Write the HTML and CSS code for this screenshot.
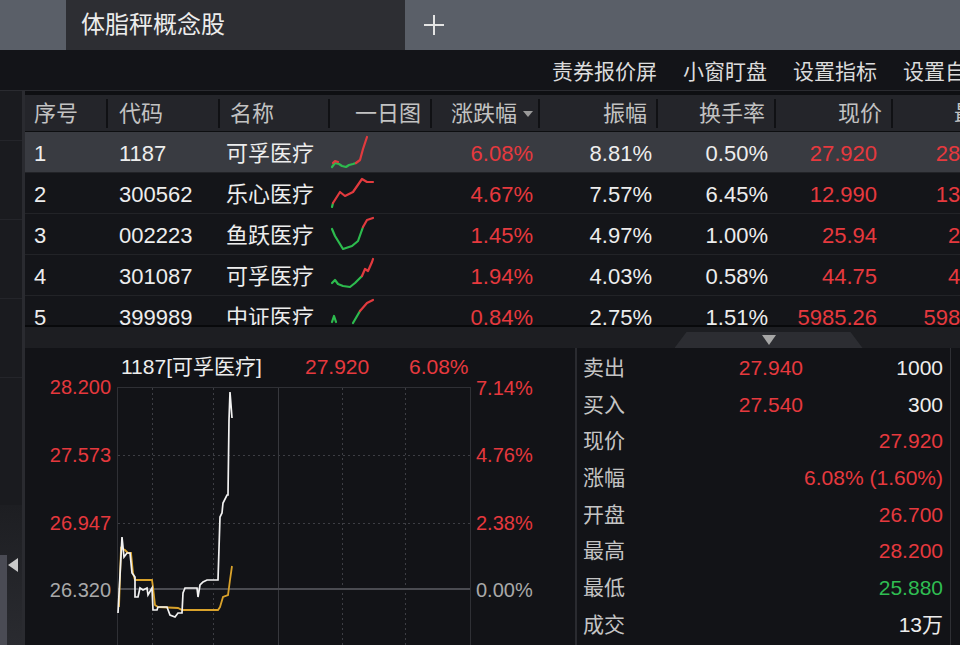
FILE: index.html
```html
<!DOCTYPE html>
<html lang="zh-CN">
<head>
    <meta charset="UTF-8">
    <title>体脂秤概念股</title>
    <link rel="stylesheet" href="styles.css">
</head>
<body>
    <div class="tabbar">
        <div class="tab-gap"></div>
        <div class="tab">体脂秤概念股</div>
        <div class="tab-add">
            <svg width="22" height="22" viewBox="0 0 22 22"><path d="M11 1v20M1 11h20" stroke="#e4e4e4" stroke-width="2"/></svg>
        </div>
    </div>
    <div class="toolbar">
        <span>责券报价屏</span><span>小窗盯盘</span><span>设置指标</span><span>设置自选</span>
    </div>

    <div class="main">
        <div class="sidebar">
            <div class="side-top"><i></i><i></i><i></i><i></i></div>
            <div class="side-grip">
                <div class="grip-edge"></div>
                <div class="grip-arrow">
                    <svg width="10" height="14" viewBox="0 0 10 14"><path d="M10 0v14L0 7z" fill="#c9c9c9"/></svg>
                </div>
            </div>
        </div>

        <div class="content">
            <div class="quote-table">
                <div class="row head">
                    <div>序号</div><div>代码</div><div>名称</div><div>一日图</div>
                    <div>涨跌幅 <svg class="sort" width="10" height="6" viewBox="0 0 10 6"><path d="M0 0h10L5 6z" fill="#9a9a9a"/></svg></div>
                    <div>振幅</div><div>换手率</div><div>现价</div><div>最高</div>
                </div>
                <div class="row active">
                    <div>1</div><div>1187</div><div>可孚医疗</div>
                    <div><svg class="spark" viewBox="0 0 46 40"><polyline class="g" points="2,35 5,31 9,32 12,34 16,35 19,33 23,32 26,31"/><polyline class="r" points="3,31 5,29 8,30"/><polyline class="r" points="26,31 30,28 33,17 37,5"/></svg></div>
                    <div class="up">6.08%</div><div>8.81%</div><div>0.50%</div><div class="up">27.920</div><div class="up">28.200</div>
                </div>
                <div class="row">
                    <div>2</div><div>300562</div><div>乐心医疗</div>
                    <div><svg class="spark" viewBox="0 0 46 40"><polyline class="g" points="2,34 3,30"/><polyline class="r" points="3,30 10,19 15,23 23,19 32,6 37,9 43,9"/></svg></div>
                    <div class="up">4.67%</div><div>7.57%</div><div>6.45%</div><div class="up">12.990</div><div class="up">13.190</div>
                </div>
                <div class="row">
                    <div>3</div><div>002223</div><div>鱼跃医疗</div>
                    <div><svg class="spark" viewBox="0 0 46 40"><polyline class="g" points="2,15 5,22 13,35 22,32 28,27 33,13"/><polyline class="r" points="33,13 37,6 43,4"/></svg></div>
                    <div class="up">1.45%</div><div>4.97%</div><div>1.00%</div><div class="up">25.94</div><div class="up">26.10</div>
                </div>
                <div class="row">
                    <div>4</div><div>301087</div><div>可孚医疗</div>
                    <div><svg class="spark" viewBox="0 0 46 40"><polyline class="g" points="2,28 5,25 8,29 13,31 20,32 25,28 32,21"/><polyline class="r" points="32,21 35,14 38,16 42,7 43,4"/></svg></div>
                    <div class="up">1.94%</div><div>4.03%</div><div>0.58%</div><div class="up">44.75</div><div class="up">45.20</div>
                </div>
                <div class="row">
                    <div>5</div><div>399989</div><div>中证医疗</div>
                    <div><svg class="spark" viewBox="0 0 46 40"><polyline class="g" points="2,26 4,20 6,26"/><polyline class="g" points="23,27 30,15"/><polyline class="r" points="30,15 37,7 43,4"/></svg></div>
                    <div class="up">0.84%</div><div>2.75%</div><div>1.51%</div><div class="up">5985.26</div><div class="up">5989.40</div>
                </div>
            </div>

            <div class="splitter">
                <div class="split-left"></div>
                <div class="split-right">
                    <div class="split-tab">
                        <svg width="14" height="10" viewBox="0 0 14 10"><path d="M0 0h14L7 10z" fill="#a6a6a6"/></svg>
                    </div>
                </div>
            </div>

            <div class="detail">
                <div class="chart-panel">
                    <div class="chart-title">
                        <span class="t-name">1187[可孚医疗]</span>
                        <span class="t-price up">27.920</span>
                        <span class="up">6.08%</span>
                    </div>
                    <svg class="chart" width="550" height="267" viewBox="25 378 550 267">
                        <rect x="117.5" y="387.5" width="353" height="300" fill="none" stroke="#2f3035"/>
                        <g stroke="#3d3e44" stroke-dasharray="2 3">
                            <line x1="152.5" y1="388" x2="152.5" y2="645"/>
                            <line x1="213.5" y1="388" x2="213.5" y2="645"/>
                            <line x1="342.5" y1="388" x2="342.5" y2="645"/>
                            <line x1="405.5" y1="388" x2="405.5" y2="645"/>
                            <line x1="118" y1="455.5" x2="470" y2="455.5"/>
                            <line x1="118" y1="523.5" x2="470" y2="523.5"/>
                        </g>
                        <line x1="278.5" y1="388" x2="278.5" y2="645" stroke="#37383d"/>
                        <line x1="118" y1="589" x2="470" y2="589" stroke="#4a4b51" stroke-width="2"/>

                        <g font-size="20" text-anchor="end">
                            <text x="111" y="394" fill="#e5383d">28.200</text>
                            <text x="111" y="462" fill="#e5383d">27.573</text>
                            <text x="111" y="530" fill="#e5383d">26.947</text>
                            <text x="111" y="597" fill="#a9a9a9">26.320</text>
                        </g>
                        <g font-size="20">
                            <text x="476" y="395" fill="#e5383d">7.14%</text>
                            <text x="476" y="462" fill="#e5383d">4.76%</text>
                            <text x="476" y="530" fill="#e5383d">2.38%</text>
                            <text x="476" y="597" fill="#a9a9a9">0.00%</text>
                        </g>

                        <!-- average price -->
                        <polyline fill="none" stroke="#d9a22b" stroke-width="1.8" points="119,607 121,548 125,550 128,553 131,553 133,573 135,580 152,580 153,587 155,605 158,607 178,608 182,610 218,610 220,607 223,597 228,595 230,580 232,566"/>
                        <!-- last price -->
                        <polyline fill="none" stroke="#f2f2f2" stroke-width="1.7" points="118,613 122,537 124,557 127,553 130,553 132,573 135,577 135,597 138,597 140,588 143,590 147,588 148,595 152,588 153,610 157,610 158,607 167,607 170,615 175,617 178,613 182,613 183,593 185,588 197,588 198,597 200,585 203,582 207,580 218,580 220,517 222,513 223,503 227,495 228,495 229,420 230,392 232,418"/>
                    </svg>
                </div>

                <div class="book">
                    <div class="lbl">卖出</div><div class="up">27.940</div><div>1000</div>
                    <div class="lbl">买入</div><div class="up">27.540</div><div>300</div>
                    <div class="lbl">现价</div><div></div><div class="up">27.920</div>
                    <div class="lbl">涨幅</div><div></div><div class="up">6.08% (1.60%)</div>
                    <div class="lbl">开盘</div><div></div><div class="up">26.700</div>
                    <div class="lbl">最高</div><div></div><div class="up">28.200</div>
                    <div class="lbl">最低</div><div></div><div class="down">25.880</div>
                    <div class="lbl">成交</div><div></div><div>13万</div>
                </div>
                <div class="edge"></div>
            </div>
        </div>
    </div>
</body>
</html>
```

FILE: styles.css
```css
* {
    box-sizing: border-box;
}
html, body {
    margin: 0;
}
body {
    width: 960px;
    height: 645px;
    overflow: hidden;
    background: #121317;
    font-family: "Liberation Sans", "Noto Sans CJK SC", sans-serif;
    color: #ededed;
}
.up {
    color: #e6393e;
}
.down {
    color: #2fbd52;
}

/* tabs */
.tabbar {
    display: flex;
    height: 50px;
    background: #5a5f68;
}
.tab-gap {
    width: 66px;
}
.tab {
    width: 339px;
    padding-left: 15px;
    background: #2d2e33;
    font-size: 24px;
    line-height: 50px;
    color: #ececec;
}
.tab-add {
    width: 58px;
    display: flex;
    align-items: center;
    justify-content: center;
}

.toolbar {
    display: flex;
    gap: 26px;
    height: 41px;
    padding: 3px 0 0 552px;
    background: #131418;
    border-bottom: 1px solid #2a2b30;
    font-size: 21px;
    line-height: 37px;
    color: #dcdcdc;
    white-space: nowrap;
    overflow: hidden;
}

.main {
    display: flex;
    height: 554px;
}

/* left collapse strip */
.sidebar {
    width: 25px;
    display: flex;
    flex-direction: column;
    background: #1a1b1f;
    border-right: 3px solid #2a2b30;
}
.side-top {
    flex: 1;
    padding-top: 49px;
}
.side-top i {
    display: block;
    height: 1px;
    margin-bottom: 78px;
    background: #24252a;
}
.side-grip {
    height: 140px;
    display: flex;
    background: linear-gradient(#1d1e22, #2a2b30);
}
.grip-edge {
    width: 7px;
    margin-top: 50px;
    background: #4a4b54;
}
.grip-arrow {
    flex: 1;
    padding: 53px 0 0 1px;
}

.content {
    flex: 1;
    min-width: 0;
    display: flex;
    flex-direction: column;
}

/* quote list */
.quote-table {
    height: 234px;
    padding-top: 4px;
    overflow: hidden;
    background: #0e0f12;
}
.row {
    display: grid;
    grid-template-columns: 83px 112px 110px 102px 108px 118px 118px 117px 120px;
    width: max-content;
    height: 41px;
    background: #141519;
    border-bottom: 1px solid #222327;
    font-size: 22px;
    line-height: 36px;
    white-space: nowrap;
}
.row.active {
    background: #393b41;
}
.row > div {
    padding: 4px 10px 0;
    overflow: hidden;
}
.row > :nth-child(n+4) {
    text-align: right;
}
.row > :nth-child(1) { padding-left: 9px; }
.row > :nth-child(2) { padding-left: 11px; }
.row > :nth-child(3) { padding-left: 6px; }
.row > :nth-child(4) { padding: 0; }
.row > :nth-child(5) { padding-right: 7px; }
.row > :nth-child(6) { padding-right: 6px; }
.row > :nth-child(7) { padding-right: 8px; }
.row > :nth-child(8) { padding-right: 16px; }
.row > :nth-child(9) { padding-right: 10px; }

.row.head {
    height: 37px;
    background: #24252a;
    border-bottom: 1px solid #0d0e10;
}
.head > div {
    height: 29px;
    align-self: center;
    padding-top: 0;
    line-height: 29px;
    border-right: 2px solid #101114;
    color: #c2c2c2;
}
.head > :nth-child(3) { padding-left: 10px; }
.head > :nth-child(n+4) { padding-right: 9px; }
.head > :nth-child(5) { padding-right: 5px; }
.head > :nth-child(9) { padding-right: 13px; }
.sort {
    vertical-align: 4px;
}
.spark {
    display: block;
    width: 46px;
    height: 40px;
}
.spark polyline {
    fill: none;
    stroke-width: 2.2;
    stroke-linejoin: round;
    stroke-linecap: round;
}
.spark .r { stroke: #e23a3e; }
.spark .g { stroke: #2dbb4e; }

/* resize handle between list and detail */
.splitter {
    height: 23px;
    display: flex;
    background: #1d1e22;
    border-top: 2px solid #08090b;
}
.split-left {
    width: 552px;
}
.split-right {
    flex: 1;
    display: flex;
    justify-content: center;
    align-items: flex-end;
}
.split-tab {
    width: 188px;
    height: 16px;
    display: flex;
    justify-content: center;
    padding-top: 3px;
    background: #2c2d32;
    clip-path: polygon(12px 0, calc(100% - 12px) 0, 100% 100%, 0 100%);
}

/* detail: intraday chart + order book */
.detail {
    flex: 1;
    display: flex;
    background: #121317;
}
.chart-panel {
    width: 552px;
    border-right: 2px solid #2a2b30;
}
.chart-title {
    display: flex;
    height: 30px;
    padding: 8px 0 0 96px;
    font-size: 21px;
    line-height: 22px;
    white-space: nowrap;
}
.t-name {
    width: 184px;
}
.t-price {
    width: 104px;
}
.chart {
    display: block;
}

.book {
    width: 373px;
    padding: 2px 7px 0 6px;
    display: grid;
    grid-template-columns: 80px 140px 1fr;
    grid-auto-rows: 36.7px;
    align-content: start;
    font-size: 21px;
    line-height: 36.7px;
    white-space: nowrap;
}
.book > div {
    text-align: right;
}
.book > .lbl {
    text-align: left;
    color: #c4c4c4;
}
.edge {
    flex: 1;
    border-left: 1px solid #2e2f34;
}
```
